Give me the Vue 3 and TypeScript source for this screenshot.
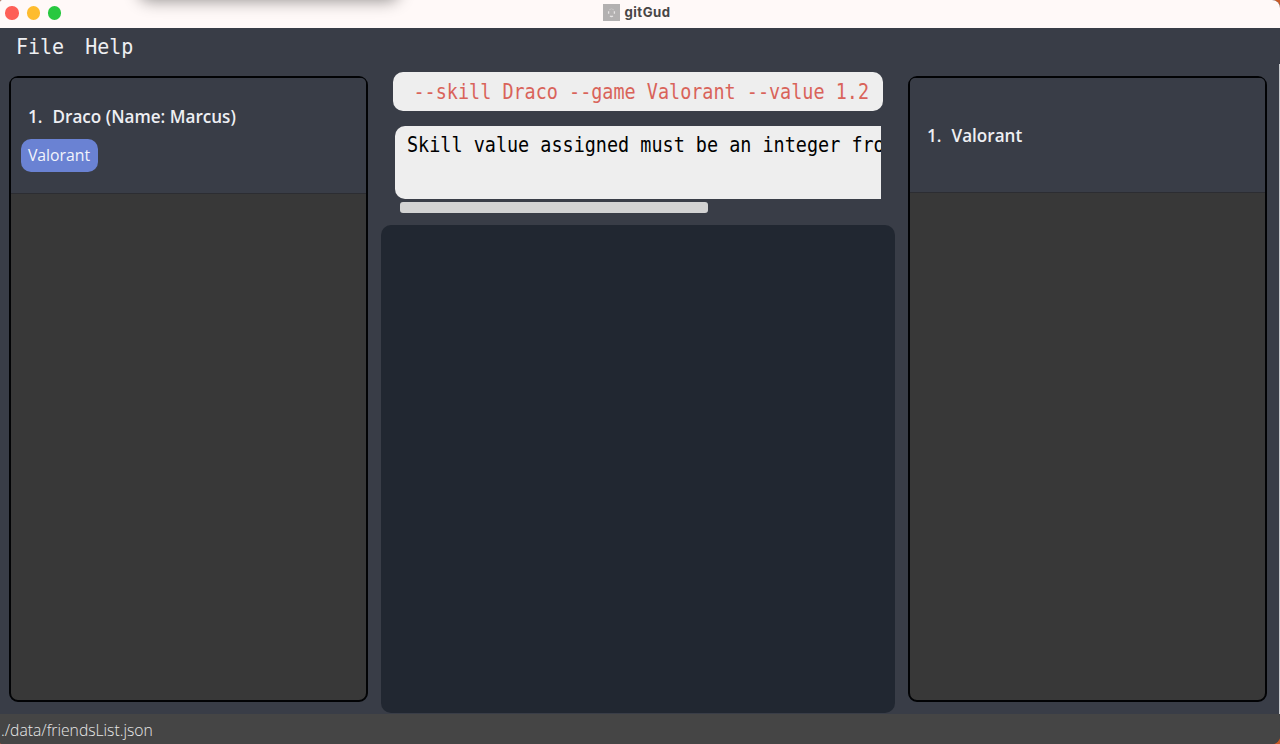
<script setup lang="ts">
interface Friend {
  name: string
  games: string[]
}

const menus: string[] = ['File', 'Help']
const friends: Friend[] = [{ name: 'Draco (Name: Marcus)', games: ['Valorant'] }]
const games: string[] = ['Valorant']
const command = '--skill Draco --game Valorant --value 1.2'
const result = 'Skill value assigned must be an integer from'
</script>

<template>
  <div class="desktop">
    <div class="window">
      <header class="titlebar">
        <div class="lights">
          <i class="light close"></i>
          <i class="light minimise"></i>
          <i class="light zoom"></i>
        </div>
        <div class="title">
          <svg class="doc" width="17" height="17" viewBox="0 0 17 17">
            <rect width="17" height="17" fill="#b3b1b1" />
            <path d="M5.6 7.2V9.8M11.4 7.2V9.8M7 12Q8.5 13 10 12" fill="none" stroke="#e6e4e4" stroke-width="1.3" />
            <path d="M6 6Q8.5 3.6 11 6" fill="none" stroke="#c6c4c4" stroke-width="1" />
          </svg>
          <span>gitGud</span>
        </div>
        <div class="cast"></div>
      </header>
      <nav class="menubar">
        <span v-for="menu in menus" :key="menu" class="mono">{{ menu }}</span>
      </nav>
      <main class="content">
        <section class="list">
          <article v-for="(friend, i) in friends" :key="friend.name" class="cell friend">
            <h2><span class="index">{{ i + 1 }}.&nbsp; </span>{{ friend.name }}</h2>
            <span v-for="game in friend.games" :key="game" class="tag">{{ game }}</span>
          </article>
        </section>
        <section class="center">
          <div class="command"><span class="mono">{{ command }}</span></div>
          <div class="result"><span class="mono">{{ result }}</span></div>
          <div class="scroll"></div>
          <div class="detail"></div>
        </section>
        <section class="list">
          <article v-for="(game, i) in games" :key="game" class="cell game">
            <h2><span class="index">{{ i + 1 }}.&nbsp; </span>{{ game }}</h2>
          </article>
        </section>
      </main>
      <footer class="status">./data/friendsList.json</footer>
    </div>
    <div class="edge"></div>
  </div>
</template>

<style>
body {
  overflow: hidden;
}
</style>

<style scoped>
* {
  box-sizing: border-box;
}
.desktop {
  position: relative;
  width: 1280px;
  height: 744px;
  background: #c85a28;
  overflow: hidden;
  font-family: "Open Sans", "Noto Sans", sans-serif;
}
.window {
  display: flex;
  flex-direction: column;
  height: 744px;
  border-radius: 2px 8px 8px 2px;
  overflow: hidden;
  background: #393d47;
}
.edge {
  position: absolute;
  right: 0;
  top: 64px;
  width: 1px;
  height: 650px;
  background: #c9cbce;
}
.titlebar {
  position: relative;
  flex: 0 0 28px;
  display: flex;
  align-items: center;
  justify-content: center;
  background: #fff9f8;
  overflow: hidden;
}
.cast {
  position: absolute;
  left: 142px;
  top: -24px;
  width: 254px;
  height: 20px;
  border-radius: 8px;
  box-shadow: 0 2px 16px 3px rgba(0, 0, 0, 0.42);
}
.lights {
  position: absolute;
  left: 5.3px;
  top: 6.4px;
  display: flex;
  gap: 8px;
}
.light {
  width: 13.4px;
  height: 13.4px;
  border-radius: 50%;
}
.close {
  background: #fe5f57;
}
.minimise {
  background: #febc2e;
}
.zoom {
  background: #28c840;
}
.title {
  display: flex;
  align-items: center;
  gap: 4px;
  height: 24px;
  margin: 0 6px 4px 0;
  font: 700 13.2px Inter, sans-serif;
  letter-spacing: 0.5px;
  color: #484646;
}
.menubar {
  flex: 0 0 43px;
  display: flex;
  gap: 21px;
  padding: 4px 16px 0;
  color: #eeeff2;
  font: 20px/28px "DejaVu Sans Mono", monospace;
}
.mono {
  display: inline-block;
  height: 28px;
  transform: scaleY(1.1);
}
.content {
  flex: 0 0 643px;
  display: grid;
  grid-template-columns: 359px 514px 359px;
  column-gap: 13px;
  padding-left: 9px;
}
.list {
  height: 626px;
  margin-top: 5px;
  border: 2px solid #020305;
  border-radius: 9px;
  background: #383838;
}
.cell {
  height: 116px;
  background: #393d47;
  border-bottom: 1px solid #2c2d32;
  border-radius: 5px 5px 0 0;
}
.friend {
  padding: 26px 0 0 9.5px;
}
.game {
  height: 115px;
  padding: 45px 0 0 9.5px;
}
h2 {
  margin: 0 0 0 7.5px;
  color: #eeeff3;
  font-size: 17.1px;
  line-height: 26px;
  font-weight: 600;
  white-space: nowrap;
}
.index {
  margin-right: 1.2px;
}
.tag {
  display: block;
  width: 77px;
  height: 33px;
  margin-top: 9px;
  border-radius: 10px;
  background: #6a82d3;
  color: #f2f4fb;
  font-size: 15.8px;
  line-height: 33px;
  text-align: center;
}
.center {
  display: flex;
  flex-direction: column;
}
.command,
.result {
  background: #eeeeee;
  font: 18.47px/28px "DejaVu Sans Mono", monospace;
  white-space: pre;
  overflow: hidden;
}
.command {
  height: 39px;
  width: 490px;
  margin: 1px 0 0 12px;
  padding: 6px 0 0 20.5px;
  border-radius: 10px;
  color: #d9635a;
}
.result {
  height: 73px;
  width: 486px;
  margin: 15px 0 0 14px;
  padding: 4.5px 0 0 12px;
  border-radius: 10px 0 0 10px;
  color: #000;
}
.scroll {
  width: 308px;
  height: 11px;
  margin: 3px 0 0 19px;
  border-radius: 3px;
  background: #d3d3d3;
}
.detail {
  height: 488px;
  margin-top: 12px;
  border-radius: 10px;
  background: #212731;
}
.status {
  flex: 0 0 30px;
  padding-left: 1px;
  background: #454545;
  color: #e8e8e8;
  font-size: 15.7px;
  font-weight: 300;
  line-height: 33px;
}
</style>
